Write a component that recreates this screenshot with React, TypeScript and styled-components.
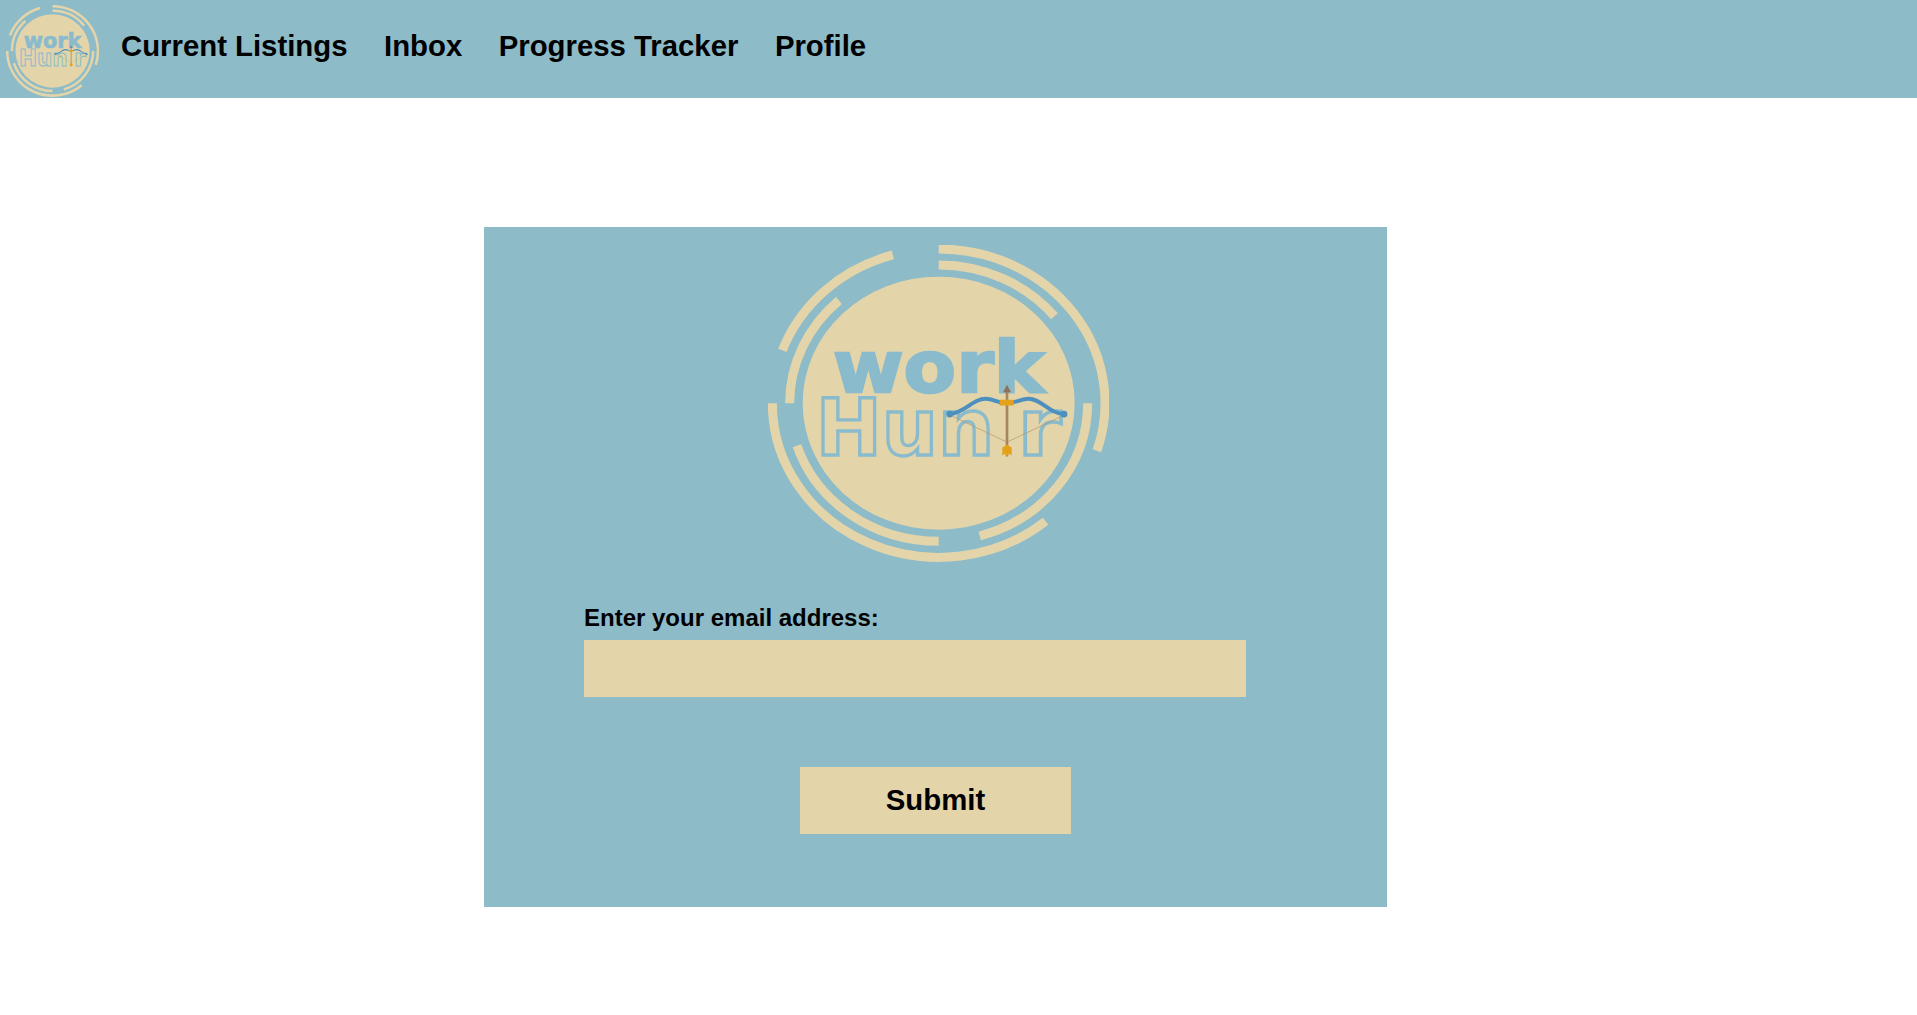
import React from "react";
import styled, { createGlobalStyle } from "styled-components";

const BLUE = "#8ebbc8";
const SAND = "#e3d5a9";
const LOGO_BLUE = "#8abbcc";

const GlobalStyle = createGlobalStyle`
  html, body {
    margin: 0;
    padding: 0;
    background: #fff;
    font-family: "Liberation Sans", Arial, sans-serif;
  }
`;

// point on the logo ring, angle in degrees clockwise from east
const ringArc = (rx: number, ry: number, from: number, to: number) => {
  const cx = 597;
  const cy = 535;
  const point = (deg: number) => {
    const rad = (deg * Math.PI) / 180;
    return `${(cx + rx * Math.cos(rad)).toFixed(1)} ${(cy + ry * Math.sin(rad)).toFixed(1)}`;
  };
  return `M ${point(from)} A ${rx} ${ry} 0 0 ${to > from ? 1 : 0} ${point(to)}`;
};

const ARCS = [
  ringArc(499, 463, -90, 18),
  ringArc(499, 463, -106, -160),
  ringArc(499, 463, 180, 50),
  ringArc(447, 415, -90, -39),
  ringArc(447, 415, -132, -180),
  ringArc(447, 415, 162, 90),
  ringArc(447, 415, 74, 0),
];

const Logo: React.FC<{ className?: string }> = ({ className }) => (
  <svg className={className} viewBox="85 60 1023 952" preserveAspectRatio="none" role="img" aria-label="workHuntr logo">
    {ARCS.map((d) => (
      <path key={d} d={d} fill="none" stroke={SAND} strokeWidth="27" />
    ))}
    <ellipse cx="597" cy="535" rx="408" ry="380" fill={SAND} />
    <text
      x="280"
      y="502"
      fontFamily="'DejaVu Sans', sans-serif"
      fontWeight="700"
      fontSize="215"
      textLength="635"
      lengthAdjust="spacingAndGlyphs"
      fill={LOGO_BLUE}
      stroke={LOGO_BLUE}
      strokeWidth="7"
    >
      work
    </text>
    <g fontFamily="'DejaVu Sans', sans-serif" fontWeight="700" fontSize="236" fill="none" stroke={LOGO_BLUE} strokeWidth="10">
      <text x="228" y="690" textLength="536" lengthAdjust="spacingAndGlyphs">
        Hun
      </text>
      <text x="834" y="690" textLength="131" lengthAdjust="spacingAndGlyphs">
        r
      </text>
    </g>
    <path d="M 630 570 L 802 652 L 975 570" fill="none" stroke="#b09468" strokeWidth="2" />
    <path d="M 802 495 V 695" stroke="#a8855c" strokeWidth="8" />
    <path d="M 802 480 L 790 502 H 814 Z" fill="#8f7058" />
    <path d="M 788 668 L 802 660 L 816 668 L 816 692 L 807 686 L 802 697 L 797 686 L 788 692 Z" fill="#e3a21a" />
    <path
      d="M 630 568 C 680 562 700 520 740 522 C 770 524 775 537 800 533 C 825 537 835 524 865 522 C 905 520 925 566 975 568"
      fill="none"
      stroke="#4d90bf"
      strokeWidth="12"
      strokeLinecap="round"
    />
    <circle cx="630" cy="568" r="10" fill="#4d90bf" />
    <circle cx="973" cy="568" r="10" fill="#4d90bf" />
    <rect x="780" y="525" width="42" height="17" rx="2" fill="#e3a21a" />
  </svg>
);

const App: React.FC = () => {
  return (
    <>
      <GlobalStyle />
      <NavBar>
        <NavLogo />
        <NavLinks>
          <NavLink href="#">Current Listings</NavLink>
          <NavLink href="#">Inbox</NavLink>
          <NavLink href="#">Progress Tracker</NavLink>
          <NavLink href="#">Profile</NavLink>
        </NavLinks>
      </NavBar>
      <Card>
        <CardLogo />
        <Form>
          <EmailLabel htmlFor="email">Enter your email address:</EmailLabel>
          <EmailInput id="email" type="email" />
          <SubmitButton type="button">Submit</SubmitButton>
        </Form>
      </Card>
    </>
  );
};

// Styled Components
const NavBar = styled.nav`
  display: flex;
  align-items: center;
  height: 98px;
  padding-left: 6px;
  background: ${BLUE};
`;

const NavLogo = styled(Logo)`
  width: 93px;
  height: 92px;
  margin-top: 4px;
`;

const NavLinks = styled.div`
  display: flex;
  gap: 36.5px;
  margin-left: 22px;
  margin-top: -6px;
`;

const NavLink = styled.a`
  font-size: 29.33px;
  font-weight: 700;
  color: #000;
  text-decoration: none;
`;

const Card = styled.main`
  width: 903px;
  height: 680px;
  box-sizing: border-box;
  margin: 129px 0 0 484px;
  padding-top: 18px;
  background: ${BLUE};
`;

const CardLogo = styled(Logo)`
  display: block;
  width: 341px;
  height: 317px;
  margin-left: 284px;
`;

const Form = styled.form`
  display: flex;
  flex-direction: column;
  padding: 42px 0 0 100px;
`;

const EmailLabel = styled.label`
  font-size: 24px;
  font-weight: 700;
  line-height: 28px;
  color: #000;
  margin-bottom: 8px;
`;

const EmailInput = styled.input`
  width: 662px;
  height: 57px;
  box-sizing: border-box;
  border: 0;
  padding: 0 10px;
  background: ${SAND};
  font: inherit;
`;

const SubmitButton = styled.button`
  align-self: flex-start;
  width: 271px;
  height: 67px;
  margin: 70px 0 0 216px;
  padding: 0 0 2px;
  border: 0;
  background: ${SAND};
  color: #000;
  font-family: inherit;
  font-size: 29.33px;
  font-weight: 700;
`;

export default App;
